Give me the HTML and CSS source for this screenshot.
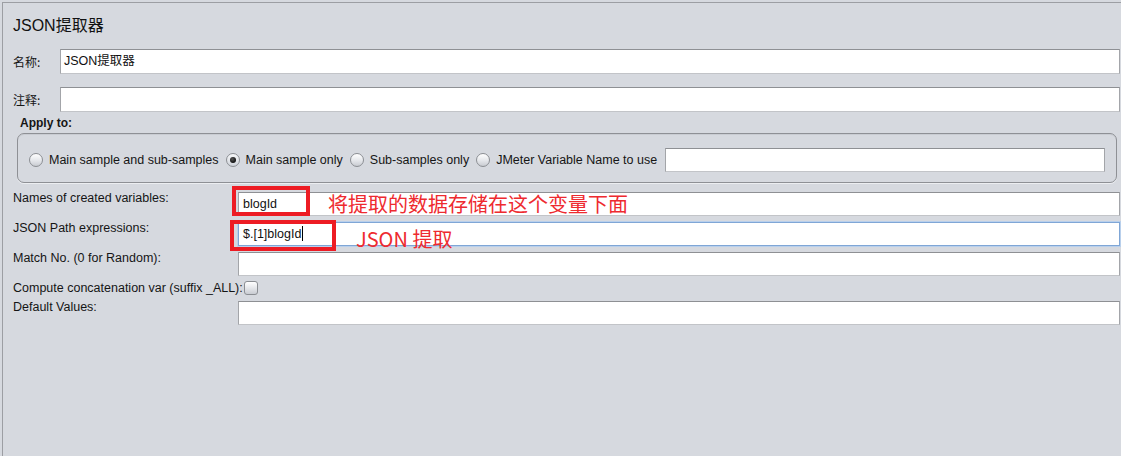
FILE: index.html
```html
<!DOCTYPE html>
<html>
<head>
    <meta charset="utf-8">
    <title>JSON提取器</title>
    <link rel="stylesheet" href="styles.css">
</head>
<body>
    <div class="panel">
        <h1 class="title">JSON提取器</h1>

        <div class="row top-row">
            <label class="cn-label">名称:</label>
            <div class="field">JSON提取器</div>
        </div>
        <div class="row top-row comment-row">
            <label class="cn-label">注释:</label>
            <div class="field"></div>
        </div>

        <div class="apply-label">Apply to:</div>
        <div class="apply-group">
            <label class="radio"><span class="radio-dot"></span>Main sample and sub-samples</label>
            <label class="radio"><span class="radio-dot checked"></span>Main sample only</label>
            <label class="radio"><span class="radio-dot"></span>Sub-samples only</label>
            <label class="radio"><span class="radio-dot"></span>JMeter Variable Name to use</label>
            <div class="field var-field"></div>
        </div>

        <div class="props">
            <div class="prop">
                <label class="prop-label">Names of created variables:</label>
                <div class="prop-value">
                    <div class="field field-text">blogId</div>
                    <span class="mark mark-names"></span>
                    <span class="note note-names">将提取的数据存储在这个变量下面</span>
                </div>
            </div>
            <div class="prop">
                <label class="prop-label">JSON Path expressions:</label>
                <div class="prop-value">
                    <div class="field field-text focused">$.[1]blogId<span class="caret"></span></div>
                    <span class="mark mark-path"></span>
                    <span class="note note-path">JSON 提取</span>
                </div>
            </div>
            <div class="prop">
                <label class="prop-label">Match No. (0 for Random):</label>
                <div class="prop-value">
                    <div class="field"></div>
                </div>
            </div>
            <div class="prop check-prop">
                <label class="prop-label">Compute concatenation var (suffix _ALL):</label>
                <span class="checkbox"></span>
            </div>
            <div class="prop">
                <label class="prop-label">Default Values:</label>
                <div class="prop-value">
                    <div class="field"></div>
                </div>
            </div>
        </div>
    </div>
</body>
</html>
```

FILE: styles.css
```css
html, body {
    margin: 0;
    height: 100%;
    background-color: #d6d9df;
}

body {
    font-family: "Liberation Sans", Arial, "Noto Sans CJK SC", sans-serif;
    font-size: 12.5px;
    color: #151515;
    overflow: hidden;
}

.panel {
    margin: 2px 0 0 2px;
    height: 100%;
    border-top: 1px solid #9c9ea3;
    border-left: 1px solid #9c9ea3;
    padding: 0 1px 0 10px;
}

.title {
    margin: 0;
    padding-top: 13px;
    font-size: 16px;
    font-weight: normal;
    line-height: 20px;
    color: #111;
}

.row {
    display: flex;
    align-items: center;
}

.top-row {
    margin-top: 13px;
}

.top-row .field {
    height: 25px;
}

.cn-label {
    width: 47px;
    font-family: "Noto Sans CJK SC", sans-serif;
    font-size: 12px;
    line-height: 14px;
}

.field {
    flex: 1;
    box-sizing: border-box;
    height: 24px;
    background-color: #fff;
    border: 1px solid #a3a5a9;
    border-top-color: #8e9094;
    border-bottom-color: #c2c4c8;
    padding: 0 3px;
    line-height: 22px;
    font-family: "Liberation Sans", Arial, "Noto Sans CJK SC", sans-serif;
    font-size: 12.5px;
    color: #111;
}

.field-text {
    padding-left: 4px;
}

.field.focused {
    border-color: #7fa6d6;
    box-shadow: 0 0 0 1px #b9d0ec;
}

.caret {
    display: inline-block;
    width: 1px;
    height: 15px;
    background-color: #000;
    vertical-align: -3px;
    margin-left: 1px;
}

.apply-label {
    margin: 4px 0 0 7px;
    font-weight: bold;
    font-size: 12px;
    line-height: 14px;
}

.apply-group {
    display: flex;
    align-items: center;
    margin: 3px 3px 0 4px;
    padding: 14px 11px 10px 11px;
    border: 1px solid #8e9095;
    border-radius: 7px;
    box-shadow: inset 0 1px 0 #c9ccd2, 0 1px 0 #eceef1;
}

.radio {
    display: flex;
    align-items: center;
    margin-right: 7px;
    white-space: nowrap;
}

.radio:last-of-type {
    margin-right: 8px;
}

.radio-dot {
    box-sizing: border-box;
    width: 14px;
    height: 14px;
    margin-right: 6px;
    border: 1px solid #8b8e93;
    border-radius: 50%;
    background: linear-gradient(#ffffff, #e4e6ea 55%, #c9ccd2);
    position: relative;
}

.radio-dot.checked {
    background: linear-gradient(#f7f8fa, #cfd3da);
}

.radio-dot.checked::after {
    content: "";
    position: absolute;
    left: 3px;
    top: 3px;
    width: 6px;
    height: 6px;
    border-radius: 50%;
    background: radial-gradient(circle at 40% 35%, #555, #111 70%);
}

.props {
    margin-top: 9px;
}

.prop {
    display: flex;
    align-items: flex-start;
    margin-bottom: 6px;
}

.prop-label {
    width: 225px;
    flex: none;
    line-height: 12px;
}

.prop-value {
    flex: 1;
    display: flex;
    position: relative;
}

.check-prop {
    align-items: center;
    margin-top: -1px;
}

.check-prop .prop-label {
    width: auto;
    margin-right: 1px;
}

.checkbox {
    box-sizing: border-box;
    width: 14px;
    height: 14px;
    border: 1px solid #8b8e93;
    border-radius: 3px;
    background: linear-gradient(#ffffff, #e2e4e8 55%, #c9ccd2);
}

.mark {
    position: absolute;
    box-sizing: border-box;
    border: 4px solid #ed1c24;
}

.mark-names {
    left: -6px;
    top: -6px;
    width: 78px;
    height: 30px;
}

.mark-path {
    left: -8px;
    top: -2px;
    width: 106px;
    height: 31px;
}

.note {
    position: absolute;
    font-family: "Noto Sans CJK SC", sans-serif;
    font-size: 20px;
    line-height: 24px;
    color: #ee2a2f;
    white-space: nowrap;
}

.note-names {
    left: 90px;
    top: 0;
}

.note-path {
    left: 118px;
    top: 5px;
}
```
